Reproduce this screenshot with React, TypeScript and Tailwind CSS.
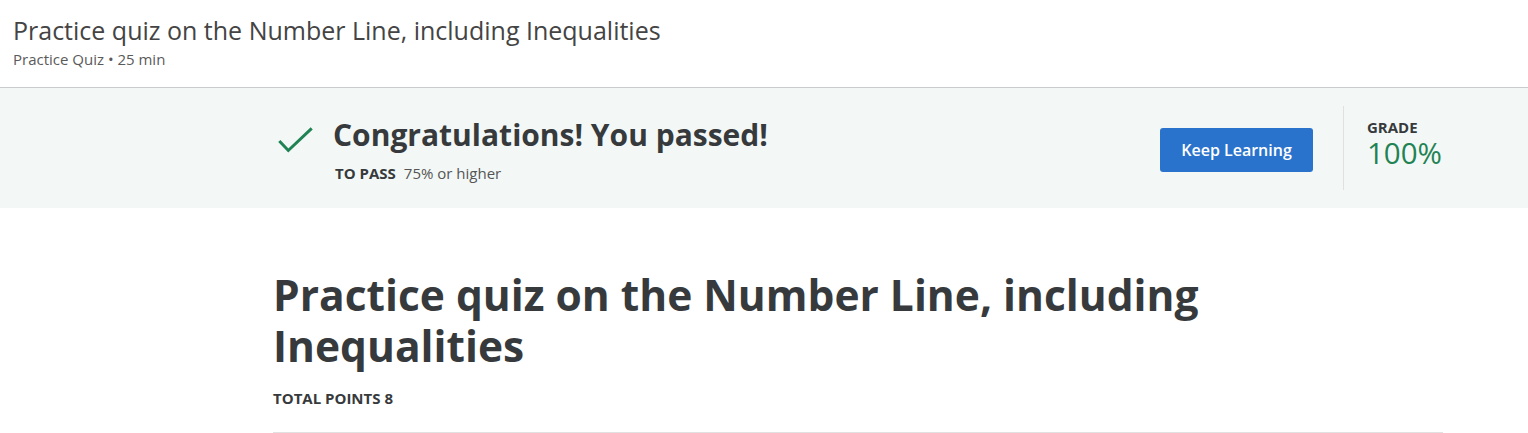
import React from "react";

export default function App() {
  return (
    <div className="w-[1528px] h-[433px] overflow-hidden bg-white text-[#373a3c]" style={{ fontFamily: '"Open Sans", sans-serif' }}>
      <header className="h-[88px] border-b border-[#c9cccd] pl-[13px] pt-[14px]">
        <h1 className="text-[25px] leading-[32px] font-normal text-[#444]">Practice quiz on the Number Line, including Inequalities</h1>
        <div className="mt-[3px] text-[15px] leading-[20px] font-normal text-[#5a5a5a]">Practice Quiz • 25 min</div>
      </header>
      <section className="h-[120px] bg-[#f3f8f6] pt-[18px]">
        <div className="ml-[277px] flex items-start w-[1166px]">
          <svg width="37" height="27" viewBox="0 0 37 27" className="mt-[20px] shrink-0" fill="none">
            <path d="M2.3 15 L11.3 24.5 L34.7 2.3" stroke="#1f8354" strokeWidth="3" />
          </svg>
          <div className="ml-[19px] flex-1 mt-[11px]">
            <div className="text-[30px] leading-[36px] font-bold text-[#373a3c]">Congratulations! You passed!</div>
            <div className="mt-[10px] ml-[2px] text-[15px] leading-[20px]">
              <span className="font-bold text-[#373a3c]">TO PASS</span>
              <span className="ml-[8px] text-[#555]">75% or higher</span>
            </div>
          </div>
          <button className="mt-[22px] shrink-0 w-[153px] h-[44px] rounded-[3px] bg-[#2a73cc] text-white text-[16px] font-semibold">Keep Learning</button>
          <div className="ml-[30px] shrink-0 w-px h-[84px] bg-[#dfe1e1]"></div>
          <div className="ml-[23px] w-[76px] shrink-0 mt-[12px]">
            <div className="text-[15px] leading-[18px] font-bold text-[#373a3c]">GRADE</div>
            <div className="text-[29.5px] leading-[34px] text-[#1f8354]">100%</div>
          </div>
        </div>
      </section>
      <main className="ml-[273px] w-[1170px] pt-[61px]">
        <h2 className="text-[42.5px] leading-[51px] font-bold text-[#373a3c]">Practice quiz on the Number Line, including Inequalities</h2>
        <div className="mt-[17px] text-[15px] leading-[20px] font-bold text-[#373a3c]">TOTAL POINTS 8</div>
        <div className="mt-[24px] h-px bg-[#e1e1e1]"></div>
      </main>
    </div>
  );
}
